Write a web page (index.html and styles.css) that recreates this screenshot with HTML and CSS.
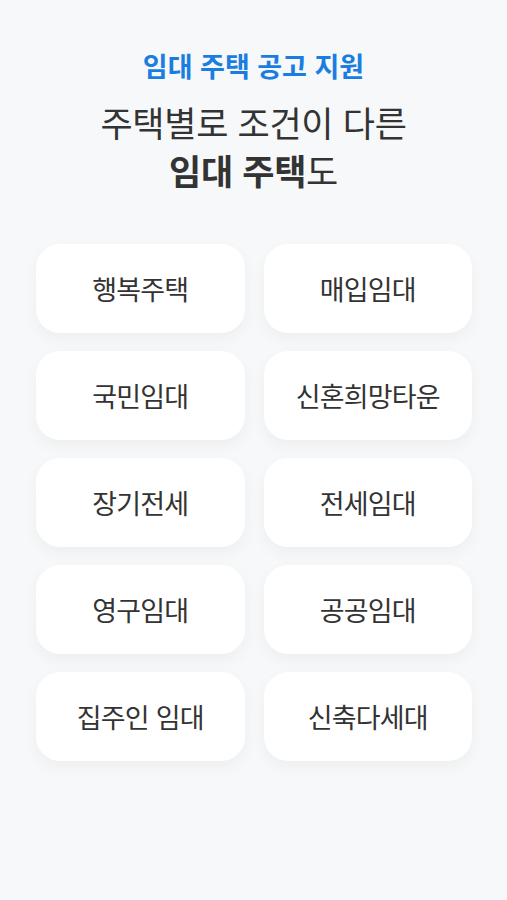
FILE: index.html
```html
<!DOCTYPE html>
<html lang="ko">
<head>
    <meta charset="UTF-8">
    <meta name="viewport" content="width=device-width, initial-scale=1.0">
    <title>임대 주택 공고 지원</title>
    <link rel="stylesheet" href="styles.css">
</head>
<body>

    <!-- Header -->
    <header class="intro">
        <div class="eyebrow">임대 주택 공고 지원</div>
        <h1 class="headline">주택별로 조건이 다른<br><strong>임대 주택</strong>도</h1>
    </header>

    <!-- Housing types -->
    <ul class="type-grid">
        <li class="type-card">행복주택</li>
        <li class="type-card">매입임대</li>
        <li class="type-card">국민임대</li>
        <li class="type-card">신혼희망타운</li>
        <li class="type-card">장기전세</li>
        <li class="type-card">전세임대</li>
        <li class="type-card">영구임대</li>
        <li class="type-card">공공임대</li>
        <li class="type-card">집주인 임대</li>
        <li class="type-card">신축다세대</li>
    </ul>

</body>
</html>
```

FILE: styles.css
```css
/* Reset */
* {
    margin: 0;
    padding: 0;
    box-sizing: border-box;
}

body {
    font-family: "Noto Sans CJK KR", "Noto Sans", sans-serif;
    background-color: #f6f8fa;
    color: #333;
    width: 507px;
    height: 900px;
    overflow: hidden;
}

/* Header */
.intro {
    padding-top: 48px;
    text-align: center;
}

.eyebrow {
    font-size: 27px;
    font-weight: 700;
    color: #1a7de0;
    line-height: 36px;
    letter-spacing: 0;
}

.headline {
    margin-top: 14px;
    font-size: 35px;
    font-weight: 400;
    line-height: 48px;
    color: #333;
    letter-spacing: -0.3px;
}

.headline strong {
    font-weight: 700;
}

/* Card grid */
.type-grid {
    list-style: none;
    display: grid;
    grid-template-columns: 1fr 1fr;
    column-gap: 19px;
    row-gap: 18px;
    padding: 50px 35px 0 36px;
}

.type-card {
    height: 89px;
    background-color: #fff;
    border-radius: 24px;
    box-shadow: 0 6px 16px rgba(0, 0, 0, 0.045);
    display: flex;
    justify-content: center;
    align-items: center;
    font-size: 27px;
    color: #333;
    letter-spacing: -0.8px;
}
```
